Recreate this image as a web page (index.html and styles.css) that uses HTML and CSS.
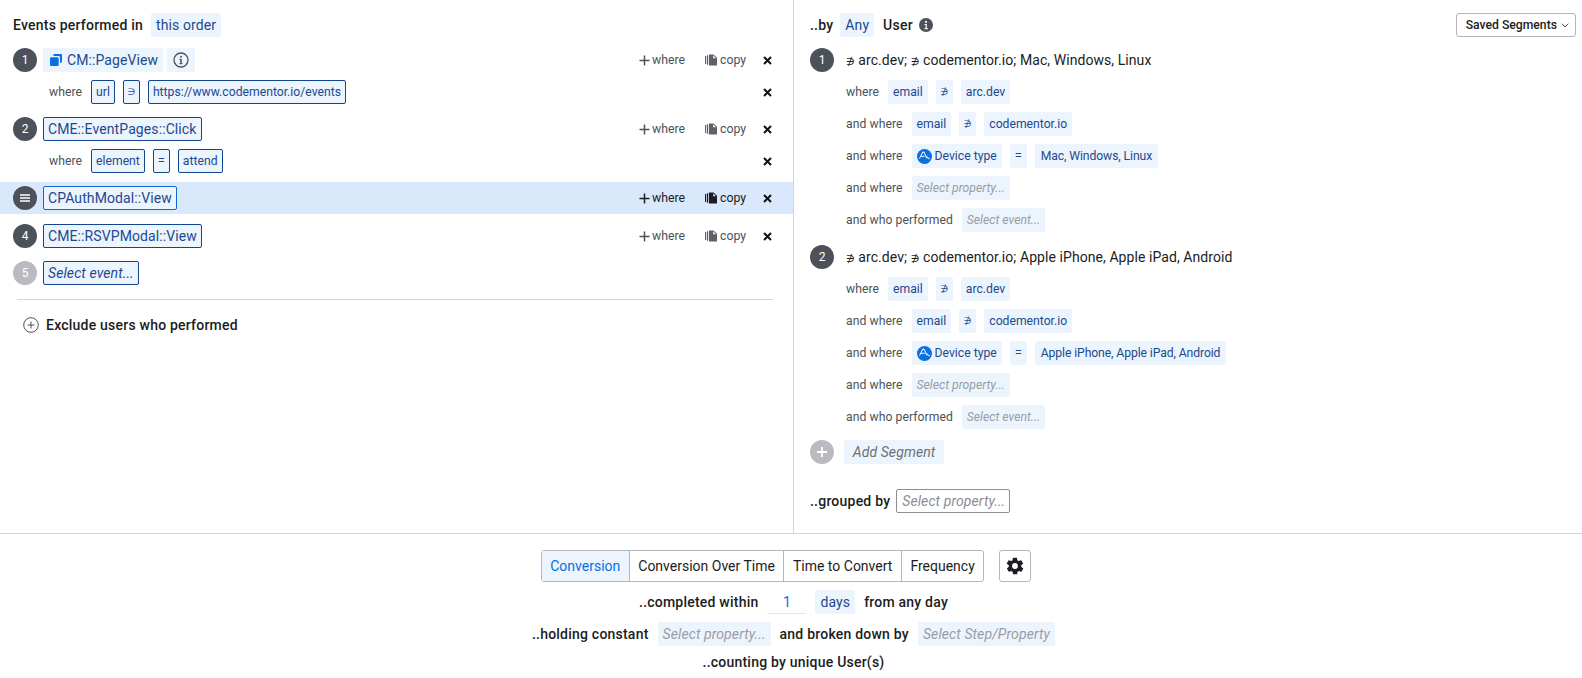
FILE: index.html
```html
<!DOCTYPE html>
<html lang="en">
<head>
<meta charset="utf-8">
<title>Funnels</title>
<link rel="stylesheet" href="styles.css">
</head>
<body>
<main class="builder">
  <section class="panel events">
    <div class="head"><b>Events performed in</b><span class="pill head-pill">this order</span></div>
    <div class="step">
      <div class="row">
        <span class="num">1</span>
        <span class="pill ev"><svg class="ico-stack" viewBox="0 0 12 12"><path d="M3.500 0h7.300A1.200 1.200 0 0 1 12 1.200v6.300a1.200 1.200 0 0 1-1.200 1.200H10V3.200A1.200 1.200 0 0 0 8.800 2H3.500z"/><rect x="0" y="3.300" width="8.700" height="8.700" rx="1.300"/></svg>CM::PageView</span>
        <span class="pill info-pill"><svg class="ico-16" viewBox="0 0 16 16"><circle cx="8" cy="8" r="7" fill="none" stroke="#4d5159" stroke-width="1.300"/><circle cx="8" cy="4.800" r="1" fill="#4d5159"/><path d="M8 7v4.800" stroke="#4d5159" stroke-width="1.500"/><path d="M6.400 7.300H8M6.400 11.700h3.200" stroke="#4d5159" stroke-width="1"/></svg></span>
        <span class="actions"><span class="act"><svg class="ico-plus" viewBox="0 0 11 11"><path d="M5.500 .5v10M.5 5.500h10"/></svg>where</span><span class="act act-copy"><svg class="ico-copy" viewBox="0 0 12 12"><path d="M0 2h1v8H0zM1.800 1.300h1.400v9.400H1.800z"/><path d="M4 .5h4.600L12 3.800V11.500H4zM8.200 1.300V4.200H11z" fill-rule="evenodd"/></svg>copy</span><svg class="ico-x" viewBox="0 0 9 9"><path d="M1 1l7 7M8 1L1 8"/></svg></span>
      </div>
      <div class="row sub">
        <span class="lbl">where</span>
        <span class="chip out">url</span><span class="chip out sym">∋</span><span class="chip out">https://www.codementor.io/events</span>
        <span class="actions"><svg class="ico-x" viewBox="0 0 9 9"><path d="M1 1l7 7M8 1L1 8"/></svg></span>
      </div>
    </div>
    <div class="step">
      <div class="row">
        <span class="num">2</span>
        <span class="pill out">CME::EventPages::Click</span>
        <span class="actions"><span class="act"><svg class="ico-plus" viewBox="0 0 11 11"><path d="M5.500 .5v10M.5 5.500h10"/></svg>where</span><span class="act act-copy"><svg class="ico-copy" viewBox="0 0 12 12"><path d="M0 2h1v8H0zM1.800 1.300h1.400v9.400H1.800z"/><path d="M4 .5h4.600L12 3.800V11.500H4zM8.200 1.300V4.200H11z" fill-rule="evenodd"/></svg>copy</span><svg class="ico-x" viewBox="0 0 9 9"><path d="M1 1l7 7M8 1L1 8"/></svg></span>
      </div>
      <div class="row sub">
        <span class="lbl">where</span>
        <span class="chip out">element</span><span class="chip out sym eq">=</span><span class="chip out">attend</span>
        <span class="actions"><svg class="ico-x" viewBox="0 0 9 9"><path d="M1 1l7 7M8 1L1 8"/></svg></span>
      </div>
    </div>
    <div class="step hover">
      <div class="row">
        <span class="num"><svg class="ico-burger" viewBox="0 0 10 8"><path d="M0 1h10M0 4h10M0 7h10"/></svg></span>
        <span class="pill out out-bright">CPAuthModal::View</span>
        <span class="actions strong"><span class="act"><svg class="ico-plus" viewBox="0 0 11 11"><path d="M5.500 .5v10M.5 5.500h10"/></svg>where</span><span class="act act-copy"><svg class="ico-copy" viewBox="0 0 12 12"><path d="M0 2h1v8H0zM1.800 1.300h1.400v9.400H1.800z"/><path d="M4 .5h4.600L12 3.800V11.500H4zM8.200 1.300V4.200H11z" fill-rule="evenodd"/></svg>copy</span><svg class="ico-x" viewBox="0 0 9 9"><path d="M1 1l7 7M8 1L1 8"/></svg></span>
      </div>
    </div>
    <div class="step after-hover">
      <div class="row">
        <span class="num">4</span>
        <span class="pill out">CME::RSVPModal::View</span>
        <span class="actions"><span class="act"><svg class="ico-plus" viewBox="0 0 11 11"><path d="M5.500 .5v10M.5 5.500h10"/></svg>where</span><span class="act act-copy"><svg class="ico-copy" viewBox="0 0 12 12"><path d="M0 2h1v8H0zM1.800 1.300h1.400v9.400H1.800z"/><path d="M4 .5h4.600L12 3.800V11.500H4zM8.200 1.300V4.200H11z" fill-rule="evenodd"/></svg>copy</span><svg class="ico-x" viewBox="0 0 9 9"><path d="M1 1l7 7M8 1L1 8"/></svg></span>
      </div>
    </div>
    <div class="step">
      <div class="row">
        <span class="num num-off">5</span>
        <span class="pill out"><i>Select event...</i></span>
      </div>
    </div>
    <hr class="rule">
    <div class="exclude"><svg class="ico-16" viewBox="0 0 16 16"><circle cx="8" cy="8" r="7.300" fill="none" stroke="#4d5159" stroke-width="1"/><path d="M8 4.500v7M4.500 8h7" stroke="#4d5159" stroke-width="1"/></svg><b>Exclude users who performed</b></div>
  </section>

  <section class="panel users">
    <div class="head">
      <b>..by</b><span class="pill any">Any</span><b>User</b>
      <svg class="ico-i" viewBox="0 0 14 14"><circle cx="7" cy="7" r="7" fill="#4d5159"/><circle cx="7" cy="3.800" r="1.100" fill="#fff"/><path d="M5.500 6h2.300v4.200h1.200v1H5.300v-1h1.300V7H5.500z" fill="#fff"/></svg>
      <span class="saved">Saved Segments<svg class="ico-chev" viewBox="0 0 8 5"><path d="M.7 .7L4 4l3.300-3.300"/></svg></span>
    </div>

    <div class="seg">
      <div class="seg-title"><span class="num">1</span><span class="seg-name"><span class="nc">∌</span> arc.dev; <span class="nc">∌</span> codementor.io; Mac, Windows, Linux</span></div>
      <div class="cond"><span class="lbl">where</span><span class="chip">email</span><span class="chip sym">∌</span><span class="chip">arc.dev</span></div>
      <div class="cond"><span class="lbl">and where</span><span class="chip">email</span><span class="chip sym">∌</span><span class="chip">codementor.io</span></div>
      <div class="cond"><span class="lbl">and where</span><span class="chip dev"><svg class="ico-dev" viewBox="0 0 15 15"><circle cx="7.500" cy="7.500" r="7.500" fill="#0a6fe0"/><path d="M2.500 9.500L5.800 3h1.200l3 6.500M4 7.300h3.700M9.200 8.500c.8-1.200 1.300-1 1.700 0s.9 2.200 2 .8" fill="none" stroke="#fff" stroke-width="1"/></svg>Device type</span><span class="chip sym eq">=</span><span class="chip val">Mac, Windows, Linux</span></div>
      <div class="cond"><span class="lbl">and where</span><span class="chip ghost">Select property...</span></div>
      <div class="cond"><span class="lbl">and who performed</span><span class="chip ghost">Select event...</span></div>
    </div>

    <div class="seg">
      <div class="seg-title"><span class="num">2</span><span class="seg-name"><span class="nc">∌</span> arc.dev; <span class="nc">∌</span> codementor.io; Apple iPhone, Apple iPad, Android</span></div>
      <div class="cond"><span class="lbl">where</span><span class="chip">email</span><span class="chip sym">∌</span><span class="chip">arc.dev</span></div>
      <div class="cond"><span class="lbl">and where</span><span class="chip">email</span><span class="chip sym">∌</span><span class="chip">codementor.io</span></div>
      <div class="cond"><span class="lbl">and where</span><span class="chip dev"><svg class="ico-dev" viewBox="0 0 15 15"><circle cx="7.500" cy="7.500" r="7.500" fill="#0a6fe0"/><path d="M2.500 9.500L5.800 3h1.200l3 6.500M4 7.300h3.700M9.200 8.500c.8-1.200 1.300-1 1.700 0s.9 2.200 2 .8" fill="none" stroke="#fff" stroke-width="1"/></svg>Device type</span><span class="chip sym eq">=</span><span class="chip val">Apple iPhone, Apple iPad, Android</span></div>
      <div class="cond"><span class="lbl">and where</span><span class="chip ghost">Select property...</span></div>
      <div class="cond"><span class="lbl">and who performed</span><span class="chip ghost">Select event...</span></div>
    </div>

    <div class="add"><span class="num num-off"><svg class="ico-add" viewBox="0 0 10 10"><path d="M5 0v10M0 5h10"/></svg></span><span class="pill add-pill"><i>Add Segment</i></span></div>
    <div class="group"><b>..grouped by</b><span class="pill group-pill"><i>Select property...</i></span></div>
  </section>
</main>

<footer class="foot">
  <div class="tools">
    <div class="tabs"><span class="tab on">Conversion</span><span class="tab">Conversion Over Time</span><span class="tab">Time to Convert</span><span class="tab">Frequency</span></div>
    <span class="gear"><svg class="ico-gear" viewBox="0 0 24 24"><path d="M19.400 13c.1-.3.100-.7.100-1s0-.7-.1-1l2.100-1.600c.2-.2.300-.4.100-.7l-2-3.400c-.1-.2-.4-.3-.6-.2l-2.500 1c-.5-.4-1.100-.7-1.700-1l-.4-2.600c0-.3-.2-.5-.5-.5h-4c-.3 0-.5.200-.5.500l-.4 2.600c-.6.300-1.200.6-1.700 1l-2.500-1c-.2-.1-.5 0-.6.200l-2 3.400c-.1.300-.1.500.1.700L4.600 11c-.1.300-.1.700-.1 1s0 .7.100 1l-2.100 1.600c-.2.200-.3.400-.1.700l2 3.400c.1.200.4.300.6.200l2.500-1c.5.400 1.100.7 1.700 1l.4 2.600c0 .3.200.5.500.5h4c.3 0 .5-.2.500-.5l.4-2.600c.6-.3 1.200-.6 1.700-1l2.500 1c.2.100.5 0 .6-.2l2-3.400c.1-.3.100-.5-.1-.7zM12 15.500a3.500 3.500 0 1 1 0-7 3.500 3.500 0 0 1 0 7z"/></svg></span>
  </div>
  <div class="line"><b>..completed within</b><span class="num-in">1</span><span class="pill days">days</span><b>from any day</b></div>
  <div class="line"><b>..holding constant</b><span class="pill ghost-p">Select property...</span><b>and broken down by</b><span class="pill ghost-p">Select Step/Property</span></div>
  <div class="line last"><b>..counting by unique User(s)</b></div>
</footer>
</body>
</html>
```
FILE: styles.css
```css
* { box-sizing: border-box; }
html, body { margin: 0; height: 678px; overflow: hidden; background: #fff; }
body { font-family: Roboto, "Liberation Sans", sans-serif; font-size: 14px; letter-spacing: .1px; color: #1b1d21; line-height: 24px; }
b { font-weight: 500; letter-spacing: .22px; }
svg { display: block; flex: none; }

.builder { display: flex; height: 534px; border-bottom: 1px solid #d4d5d8; }
.panel { padding-top: 13px; }
.events { width: 793px; }
.users { flex: 1; border-left: 1px solid #d4d5d8; padding-left: 16px; padding-right: 6px; }

.head { display: flex; align-items: center; height: 24px; }
.events .head { padding-left: 13px; margin-bottom: 7px; }

.pill { display: inline-flex; align-items: center; height: 24px; padding: 0 5px; background: #ecf4fe; color: #1c4a8e; border-radius: 2px; white-space: nowrap; }
.head-pill { margin-left: 8px; }
.info-pill { margin-left: 4px; padding: 0 5px; width: 28px; justify-content: center; }
.out { border: 1px solid #12458f; padding: 0 4px; }
.out-bright { border-color: #1268d6; }

.step { padding: 4px 0; margin-bottom: 5px; }
.after-hover { margin-top: 6px; }
.hover { background: #d9e8fb; }
.row { display: flex; align-items: center; height: 24px; padding-left: 13px; padding-right: 21px; }
.sub { margin-top: 8px; padding-left: 49px; }
.num { flex: none; display: flex; align-items: center; justify-content: center; width: 24px; height: 24px; border-radius: 50%; background: #4d5159; color: #fff; font-size: 12px; letter-spacing: 0; margin-right: 6px; }
.num-off { background: #b9bbc0; }

.lbl { color: #4d5159; font-size: 12.200px; letter-spacing: .05px; margin-right: 9px; white-space: nowrap; }
.chip { display: inline-flex; align-items: center; height: 24px; padding: 0 5px; margin-right: 8px; background: #ecf4fe; color: #1c4a8e; font-size: 12.200px; letter-spacing: 0; border-radius: 2px; white-space: nowrap; }
.chip.out { padding: 0 4px; }
.chip.sym { width: 17px; justify-content: center; padding: 0; font-family: "DejaVu Sans", sans-serif; font-size: 9px; }
.chip.eq { font-family: Roboto, sans-serif; font-size: 13px; }

.actions { margin-left: auto; display: flex; align-items: center; color: #4d5159; font-size: 12.300px; letter-spacing: 0; }
.act { display: flex; align-items: center; }
.act-copy { margin-left: 20px; width: 40px; }
.actions .ico-x { margin-left: 18px; }
.strong { color: #1b1d21; }
.ico-x { width: 9px; height: 9px; fill: none; stroke: #111; stroke-width: 2; }
.ico-plus { width: 11px; height: 11px; margin-right: 2px; fill: none; stroke: #4d5159; stroke-width: 1.500; }
.strong .ico-plus { stroke: #1b1d21; }
.ico-copy { width: 12px; height: 12px; margin-right: 3px; fill: #5d6168; }
.strong .ico-copy { fill: #1b1d21; }
.ico-burger { width: 10px; height: 8px; fill: none; stroke: #fff; stroke-width: 1.300; }
.ico-stack { width: 12px; height: 12px; margin: 0 5px 0 2px; fill: #0a6fe0; }
.ico-16 { width: 16px; height: 16px; }

.rule { height: 1px; border: 0; background: #d4d5d8; margin: 10px 20px 0 17px; }
.exclude { display: flex; align-items: center; gap: 7px; margin: 13px 0 0 23px; }

.any { margin-left: 7px; margin-right: 9px; padding: 0 5px; }
.ico-i { width: 14px; height: 14px; margin-left: 6px; }
.saved { margin-left: auto; display: flex; align-items: center; height: 24px; padding: 0 6px 0 9px; border: 1px solid #b4b6bb; border-radius: 3px; font-size: 12.200px; letter-spacing: 0; font-weight: 500; }
.ico-chev { width: 8px; height: 5px; margin-left: 4px; fill: none; stroke: #4d5159; stroke-width: 1; }

.seg { margin-top: 11px; }
.seg + .seg { margin-top: 13px; }
.seg-title { display: flex; align-items: center; height: 24px; }
.seg-name { margin-left: 6px; padding-top: 2px; letter-spacing: .07px; }
.nc { font-family: "DejaVu Sans", sans-serif; font-size: 10px; }
.cond { display: flex; align-items: center; height: 24px; margin-top: 8px; padding-left: 36px; }
.dev { padding-left: 5px; }
.ico-dev { width: 15px; height: 15px; margin-right: 3px; }
.chip.val { padding: 0 6px; letter-spacing: -.1px; }
.ghost { color: #9a9da4; font-style: italic; }

.add { display: flex; align-items: center; margin-top: 11px; }
.add .num { margin-right: 10px; }
.add-pill { width: 100px; justify-content: center; color: #6c7077; }
.ico-add { width: 10px; height: 10px; fill: none; stroke: #fff; stroke-width: 1.800; }
.group { display: flex; align-items: center; margin-top: 25px; }
.group-pill { margin-left: 6px; width: 114px; background: #fff; border: 1px solid #8b8e95; color: #8b8e95; }

.foot { display: flex; flex-direction: column; align-items: center; padding-left: 5px; }
.tools { display: flex; align-items: center; margin-top: 16px; margin-right: 15px; height: 32px; }
.tabs { display: flex; height: 32px; border: 1px solid #b4b6bb; border-radius: 3px; font-size: 14px; letter-spacing: 0; }
.tab { display: flex; align-items: center; justify-content: center; border-left: 1px solid #b4b6bb; padding: 0 8.500px; white-space: nowrap; }
.tab:first-child { border-left: 0; }
.on { background: #ecf4fe; color: #0a6fe0; }
.gear { display: flex; align-items: center; justify-content: center; width: 32px; height: 32px; margin-left: 15px; border: 1px solid #b4b6bb; border-radius: 3px; }
.ico-gear { width: 20px; height: 20px; fill: #1b1d21; }
.line { display: flex; align-items: center; height: 24px; margin-top: 8px; }
.line > * + * { margin-left: 9px; }
.num-in { width: 39px; text-align: center; color: #0a6fe0; border-bottom: 1px solid #dfe6ef; height: 24px; }
.days { color: #1c4a8e; }
.ghost-p { color: #9a9da4; font-style: italic; }
.last { margin-top: 4px; }
```
